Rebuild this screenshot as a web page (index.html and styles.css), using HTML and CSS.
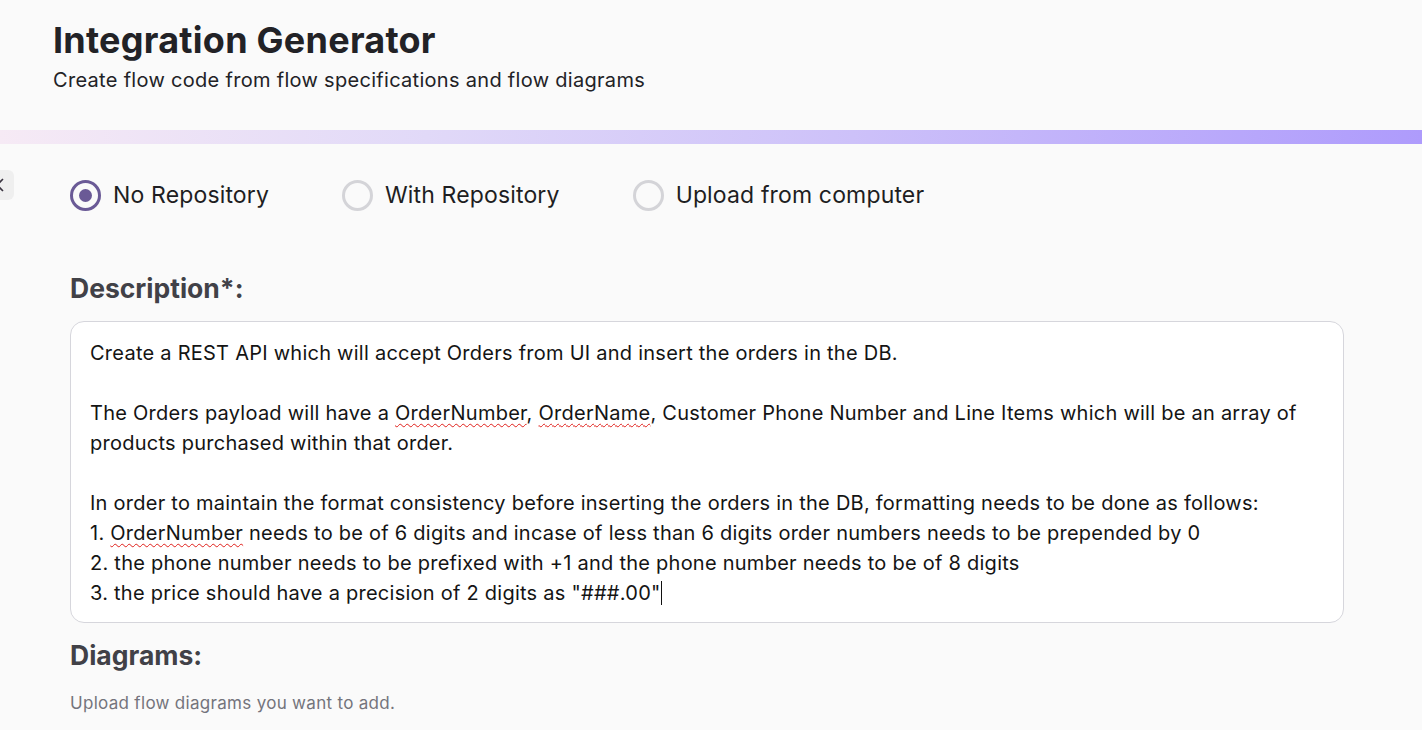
FILE: index.html
```html
<!DOCTYPE html>
<html lang="en">
<head>
<meta charset="utf-8">
<title>Integration Generator</title>
<link rel="stylesheet" href="styles.css">
</head>
<body>
<header class="page-header">
  <h1 class="title">Integration Generator</h1>
  <p class="subtitle">Create flow code from flow specifications and flow diagrams</p>
</header>
<div class="accent-bar"></div>
<div class="content">
  <button class="collapse-btn" aria-label="Collapse">
    <svg width="12" height="16" viewBox="0 0 12 16"><path d="M7 2 L1 8 L7 14" fill="none" stroke="#3a3440" stroke-width="1.6"/></svg>
  </button>
  <main class="main">
    <div class="radio-row">
      <label class="radio"><span class="radio-dot checked"></span><span class="radio-label">No Repository</span></label>
      <label class="radio"><span class="radio-dot"></span><span class="radio-label">With Repository</span></label>
      <label class="radio"><span class="radio-dot"></span><span class="radio-label">Upload from computer</span></label>
    </div>
    <h2 class="section-label desc-label">Description*:</h2>
    <div class="textbox">
      <div class="line">Create a REST API which will accept Orders from UI and insert the orders in the DB.</div>
      <div class="line">&nbsp;</div>
      <div class="line">The Orders payload will have a <span class="spell">OrderNumber</span>, <span class="spell">OrderName</span>, Customer Phone Number and Line Items which will be an array of</div>
      <div class="line">products purchased within that order.</div>
      <div class="line">&nbsp;</div>
      <div class="line">In order to maintain the format consistency before inserting the orders in the DB, formatting needs to be done as follows:</div>
      <div class="line">1. <span class="spell">OrderNumber</span> needs to be of 6 digits and incase of less than 6 digits order numbers needs to be prepended by 0</div>
      <div class="line">2. the phone number needs to be prefixed with +1 and the phone number needs to be of 8 digits</div>
      <div class="line">3. the price should have a precision of 2 digits as "###.00"<span class="caret"></span></div>
    </div>
    <h2 class="section-label diag-label">Diagrams:</h2>
    <p class="hint">Upload flow diagrams you want to add.</p>
  </main>
</div>
</body>
</html>
```
FILE: styles.css
```css
* { box-sizing: border-box; }
html, body { margin: 0; padding: 0; }
body {
  background: #fafafa;
  font-family: Inter, Roboto, "Liberation Sans", sans-serif;
  color: #1c1c1e;
  width: 1422px;
  height: 730px;
  overflow: hidden;
}
.page-header {
  padding: 18px 0 0 53px;
  height: 130px;
}
.title {
  margin: 0;
  font-size: 36px;
  line-height: 44px;
  font-weight: 700;
  letter-spacing: 0.25px;
  color: #222226;
}
.subtitle {
  margin: 6px 0 0;
  font-size: 20px;
  line-height: 24px;
  letter-spacing: 0.3px;
  color: #222226;
}
.accent-bar {
  height: 14px;
  background: linear-gradient(90deg, #f6eaf5 0%, #e1d9f8 30%, #cdc1f9 60%, #ae9bfc 100%);
}
.content {
  display: flex;
  position: relative;
}
.collapse-btn {
  position: absolute;
  left: -10px;
  top: 26px;
  width: 24px;
  height: 30px;
  border: none;
  border-radius: 6px;
  background: #efefef;
  padding: 0;
  display: flex;
  align-items: center;
  justify-content: center;
}
.main {
  flex: 1;
  padding: 36px 78px 0 70px;
}
.radio-row {
  display: flex;
  gap: 73px;
  height: 30px;
}
.radio {
  display: flex;
  align-items: center;
  gap: 12px;
}
.radio-dot {
  width: 31px;
  height: 31px;
  border-radius: 50%;
  border: 3px solid #d4d4d8;
  display: flex;
  align-items: center;
  justify-content: center;
  background: #fafafa;
}
.radio-dot.checked { border-color: #6a5a96; }
.radio-dot.checked::after {
  content: "";
  width: 13px;
  height: 13px;
  border-radius: 50%;
  background: #6a5a96;
}
.radio-label {
  font-size: 23px;
  letter-spacing: 0.15px;
  color: #1e1e22;
}
.section-label {
  margin: 0;
  font-size: 26.5px;
  line-height: 32px;
  font-weight: 700;
  color: #414147;
}
.desc-label { margin-top: 62px; }
.textbox {
  margin-top: 17px;
  background: #ffffff;
  border: 1px solid #d6d6dc;
  border-radius: 14px;
  padding: 16px 19px;
  height: 302px;
  font-size: 20px;
  line-height: 30px;
  letter-spacing: 0.25px;
  color: #141414;
}
.line { white-space: nowrap; }
.spell {
  text-decoration: underline wavy #e0201b;
  text-decoration-thickness: 1.3px;
  text-underline-offset: 3px;
}
.caret {
  display: inline-block;
  width: 1px;
  height: 24px;
  background: #111;
  vertical-align: -5px;
}
.diag-label { margin-top: 16px; }
.hint {
  margin: 22px 0 0;
  font-size: 17px;
  line-height: 20px;
  letter-spacing: 0.3px;
  color: #74747c;
}
```
